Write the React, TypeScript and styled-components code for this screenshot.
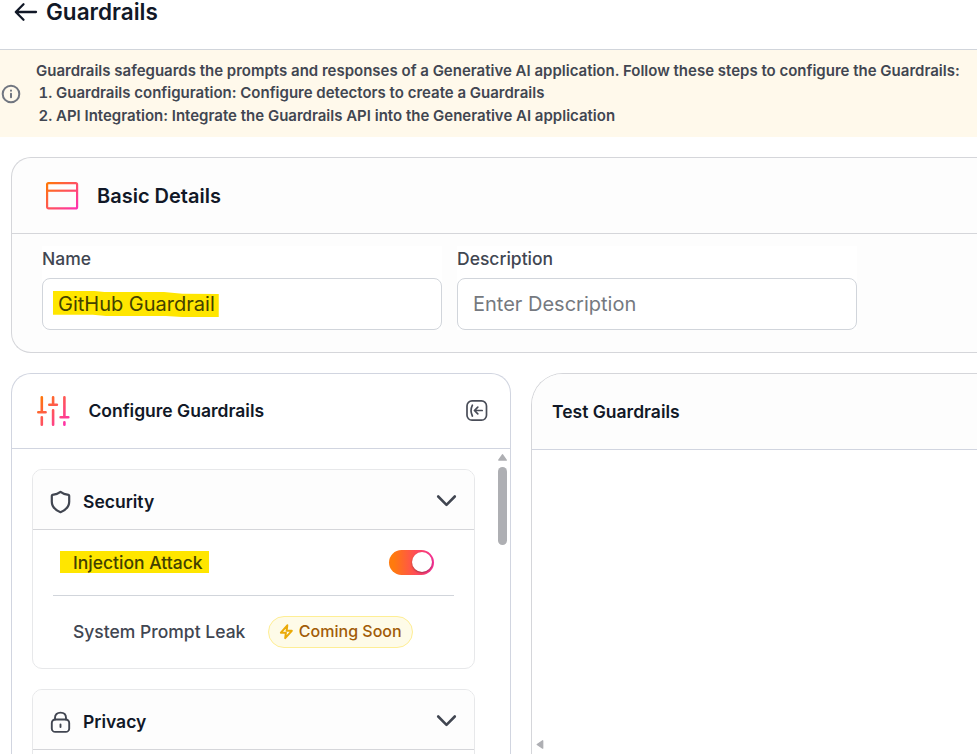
import React from "react";
import styled, { createGlobalStyle } from "styled-components";

const Global = createGlobalStyle`
  * { box-sizing: border-box; }
  html, body, #root { margin: 0; height: 100%; }
  body {
    overflow: hidden;
    background: #fff;
    font-family: Inter, "Liberation Sans", sans-serif;
    color: #111827;
  }
  svg { display: block; flex: none; }
`;

const Page = styled.div`
  width: 977px;
  height: 754px;
  overflow: hidden;
  display: flex;
  flex-direction: column;
`;

const TopBar = styled.header`
  flex: none;
  height: 50px;
  padding: 0 0 25px 14px;
  display: flex;
  align-items: center;
  gap: 8px;
  border-bottom: 1px solid #d1d5db;
`;

const PageTitle = styled.h1`
  margin: 0;
  font-size: 22.5px;
  line-height: 24px;
  font-weight: 600;
`;

const Banner = styled.section`
  flex: none;
  height: 87px;
  display: flex;
  align-items: center;
  gap: 15px;
  padding-left: 1px;
  background: #fff9eb;
  color: #414651;
  font-size: 15px;
  font-weight: 600;
  line-height: 22.5px;
  white-space: nowrap;
`;

const BannerText = styled.div`
  margin-top: 0;
`;

const Step = styled.div`
  display: flex;
  padding-left: 2.5px;
`;

const StepNumber = styled.span`
  width: 17.5px;
  font-variant-numeric: tabular-nums;
`;

const DetailsCard = styled.section`
  flex: none;
  height: 196px;
  margin: 20px 0 0 11px;
  border: 1px solid #d5d6da;
  border-right: 0;
  border-radius: 20px 0 0 20px;
  background: #fdfdfd;
`;

const DetailsHeader = styled.div`
  height: 76px;
  padding-left: 33px;
  display: flex;
  align-items: center;
  gap: 18px;
  border-bottom: 1px solid #d5d6da;
`;

const SectionTitle = styled.h2<{ $size: number }>`
  margin: 0;
  font-size: ${(p) => p.$size}px;
  font-weight: 600;
  line-height: 24px;
`;

const Fields = styled.div`
  display: flex;
  gap: 15px;
  padding: 12px 30px;
`;

const Field = styled.label`
  width: 400px;
  background: #fff;
  display: flex;
  flex-direction: column;
`;

const FieldLabel = styled.span`
  height: 32px;
  line-height: 26px;
  font-size: 17.5px;
  font-weight: 500;
  color: #414651;
`;

const InputBox = styled.div`
  height: 52px;
  padding: 0 15px;
  display: flex;
  align-items: center;
  border: 1px solid #d1d5db;
  border-radius: 8px;
  background: #fff;
  font-size: 20px;
  color: #757980;
`;

const MarkedText = styled.span<{ $shape: string; $left: number; $right: number; $top: number; $bottom: number }>`
  position: relative;
  z-index: 0;
  color: #434100;
  &::before {
    content: "";
    position: absolute;
    z-index: -1;
    left: -${(p) => p.$left}px;
    right: -${(p) => p.$right}px;
    top: ${(p) => p.$top}px;
    bottom: ${(p) => p.$bottom}px;
    background: #ffe600;
    clip-path: ${(p) => p.$shape};
  }
`;

const Columns = styled.main`
  flex: 1;
  min-height: 0;
  display: flex;
  gap: 20px;
  padding: 20px 0 0 11px;
`;

const ConfigurePanel = styled.section`
  width: 500px;
  border: 1px solid #d1d5e0;
  border-bottom: 0;
  border-radius: 20px 20px 0 0;
  display: flex;
  flex-direction: column;
`;

const ConfigureHeader = styled.div`
  flex: none;
  height: 75px;
  display: flex;
  align-items: center;
  padding: 0 22px 0 25px;
  gap: 18.4px;
  border-bottom: 1px solid #d1d5e0;
  h2 { flex: 1; }
`;

const ScrollBody = styled.div`
  flex: 1;
  min-height: 0;
  display: flex;
  justify-content: space-between;
`;

const Groups = styled.div`
  width: 443px;
  margin: 20px 0 0 20px;
  display: flex;
  flex-direction: column;
  gap: 20px;
`;

const Group = styled.section<{ $height: number }>`
  flex: none;
  height: ${(p) => p.$height}px;
  border: 1px solid #e7e8ea;
  border-radius: 10px;
  overflow: hidden;
`;

const GroupHeader = styled.div`
  height: 60px;
  padding: 4px 17px 0;
  display: flex;
  align-items: center;
  gap: 12px;
  background: #fdfdfd;
  border-bottom: 1px solid #d5d6da;
  h2 { flex: 1; }
`;

const DetectorRow = styled.div<{ $divided?: boolean }>`
  height: ${(p) => (p.$divided ? 66 : 72)}px;
  margin: 0 20px;
  padding: 0 20px;
  display: flex;
  align-items: center;
  gap: 23px;
  border-bottom: ${(p) => (p.$divided ? "1px solid #d1d5db" : "0")};
  font-size: 17.5px;
  font-weight: 500;
  color: #414651;
`;

const DetectorName = styled.span`
  padding-bottom: 2px;
`;

const Toggle = styled.span`
  width: 45px;
  height: 25px;
  margin-left: auto;
  padding: 2px;
  display: flex;
  justify-content: flex-end;
  border-radius: 13px;
  background: linear-gradient(90deg, #ff7a0d 10%, #ff5151 55%, #f83099 100%);
`;

const Knob = styled.span`
  width: 20px;
  height: 20px;
  border-radius: 50%;
  background: #fff;
  box-shadow: 0 1px 2px rgba(0, 0, 0, 0.35);
`;

const Badge = styled.span`
  width: 145px;
  height: 32px;
  padding-left: 10px;
  display: flex;
  align-items: center;
  gap: 4.5px;
  border: 1px solid #feee95;
  border-radius: 16px;
  background: #fefbe8;
  color: #a15c07;
  font-size: 16px;
  white-space: nowrap;
`;

const BadgeLabel = styled.span`
  padding-bottom: 2px;
`;

const ScrollTrack = styled.div`
  width: 9px;
  margin: 5px 3px 0 0;
  display: flex;
  flex-direction: column;
  gap: 6px;
`;

const ScrollThumb = styled.div`
  height: 78px;
  border-radius: 5px;
  background: #aeafb3;
`;

const TestPanel = styled.section`
  flex: 1;
  border: 1px solid #d5d6da;
  border-right: 0;
  border-bottom: 0;
  border-radius: 32px 0 0 0;
  overflow: hidden;
  display: flex;
  flex-direction: column;
`;

const TestHeader = styled.div`
  height: 76px;
  padding: 0 0 0 20px;
  display: flex;
  align-items: center;
  background: #fdfdfd;
  border-bottom: 1px solid #d1d5e0;
`;

const HorizontalTrack = styled.div`
  margin-top: auto;
  padding: 0 0 5px 4px;
`;

const BackArrow = () => (
  <svg width="24" height="24" viewBox="0 0 24 24" fill="none" stroke="#111827" strokeWidth="2.3" strokeLinecap="round" strokeLinejoin="round">
    <path d="M22 12H2M9.5 4.2 1.8 12l7.7 7.8" />
  </svg>
);

const InfoIcon = () => (
  <svg width="20" height="20" viewBox="0 0 20 20" fill="none" stroke="#717680" strokeWidth="2" strokeLinecap="round">
    <circle cx="10" cy="10" r="8.3" />
    <path d="M10 9.8v3.5M10 6.6v.1" />
  </svg>
);

const Gradient = ({ id }: { id: string }) => (
  <defs>
    <linearGradient id={id} gradientUnits="userSpaceOnUse" x1="2" y1="2" x2="31" y2="31">
      <stop stopColor="#ff7a00" />
      <stop offset="1" stopColor="#ff2fb3" />
    </linearGradient>
  </defs>
);

const WindowIcon = () => (
  <svg width="34" height="34" viewBox="0 0 34 34" fill="none" stroke="url(#windowFill)" strokeWidth="2.2" strokeLinejoin="round">
    <Gradient id="windowFill" />
    <rect x="2.1" y="4.1" width="30" height="25.3" rx="1.5" />
    <path d="M2 11.7h30" />
  </svg>
);

const SlidersIcon = () => (
  <svg width="33" height="34" viewBox="0 0 33 34" fill="none" stroke="url(#sliderFill)" strokeWidth="2.6" strokeLinecap="round">
    <Gradient id="sliderFill" />
    <path d="M4.8 3.3v15M4.8 23.3v7.4M1.3 18.3h7.3M16.1 3.3v7.5M16.1 16.3v14.4M12.3 10.8h7.6M27.4 3.3v20M27.4 28.3v2.4M23.6 23.3h7.7" />
  </svg>
);

const CollapseIcon = () => (
  <svg width="22" height="22" viewBox="0 0 22 22" fill="none" stroke="#494d58" strokeWidth="1.7" strokeLinecap="round" strokeLinejoin="round">
    <rect x="1" y=".9" width="19.5" height="19.3" rx="5" />
    <path d="M6.4 5.2C4.8 8.5 4.8 12.8 6.4 16M16.2 10.5H8.6M11.8 7.1l-3.4 3.4 3.4 3.4" />
  </svg>
);

const ShieldIcon = () => (
  <svg width="21" height="24" viewBox="0 0 21 24" fill="none" stroke="#414651" strokeWidth="2.2" strokeLinejoin="round">
    <path d="M10.5 1.8C8.2 3.7 5.5 4.4 2.5 4.8c-.5.1-.7.4-.7.9v6c0 4.8 3.8 8.500 8.700 10.500 4.900-2 8.700-5.700 8.700-10.500v-6c0-.5-.2-.8-.7-.9-3-.4-5.700-1.100-8-3Z" />
  </svg>
);

const LockIcon = () => (
  <svg width="21" height="24" viewBox="0 0 21 24" fill="none" stroke="#414651" strokeWidth="1.9" strokeLinecap="round">
    <rect x="1.8" y="9.500" width="17.4" height="12.4" rx="3.5" />
    <path d="M5 9.500V7.800C5 4.600 7.200 2.600 10.500 2.600S16 4.600 16 7.800V9.500M10.500 14.500v2.500" />
  </svg>
);

const ChevronIcon = () => (
  <svg width="22" height="16" viewBox="0 0 22 16" fill="none" stroke="#414651" strokeWidth="2.6" strokeLinecap="round" strokeLinejoin="round">
    <path d="m3.2 2.5 8.3 8.3 8.3-8.3" />
  </svg>
);

const BoltIcon = () => (
  <svg width="15" height="16" viewBox="0 0 15 16" fill="none" stroke="#eaaa08" strokeWidth="2" strokeLinejoin="round">
    <path d="M8.3 1.300 1.900 8.700h5l-.7 5.500L12.800 6.800H7.600l.7-5.500Z" />
  </svg>
);

const UpArrow = () => (
  <svg width="9" height="7" viewBox="0 0 9 7" fill="#aeafb3" stroke="#aeafb3" strokeWidth="1.500" strokeLinejoin="round">
    <path d="M4.500.9 8.200 6.100H.8Z" />
  </svg>
);

const LeftArrow = () => (
  <svg width="8" height="9" viewBox="0 0 8 9" fill="#aeafb3" stroke="#aeafb3" strokeWidth="1.300" strokeLinejoin="round">
    <path d="M1.200 4.500 6.700.8v7.400Z" />
  </svg>
);

export default function App() {
  return (
    <>
      <Global />
      <Page>
        <TopBar>
          <BackArrow />
          <PageTitle>Guardrails</PageTitle>
        </TopBar>
        <Banner>
          <InfoIcon />
          <BannerText>
            <div>Guardrails safeguards the prompts and responses of a Generative AI application. Follow these steps to configure the Guardrails:</div>
            <Step>
              <StepNumber>1.</StepNumber>
              Guardrails configuration: Configure detectors to create a Guardrails
            </Step>
            <Step>
              <StepNumber>2.</StepNumber>
              API Integration: Integrate the Guardrails API into the Generative AI application
            </Step>
          </BannerText>
        </Banner>

        <DetailsCard>
          <DetailsHeader>
            <WindowIcon />
            <SectionTitle $size={20}>Basic Details</SectionTitle>
          </DetailsHeader>
          <Fields>
            <Field>
              <FieldLabel>Name</FieldLabel>
              <InputBox>
                <MarkedText
                  $left={5}
                  $right={4}
                  $top={-1}
                  $bottom={-1}
                  $shape="polygon(0 0, 25% 0, 31% 4%, 67% 4%, 78% 11%, 100% 12%, 100% 100%, 78% 100%, 68% 96%, 32% 96%, 24% 91%, 0 91%)"
                >
                  GitHub Guardrail
                </MarkedText>
              </InputBox>
            </Field>
            <Field>
              <FieldLabel>Description</FieldLabel>
              <InputBox>Enter Description</InputBox>
            </Field>
          </Fields>
        </DetailsCard>

        <Columns>
          <ConfigurePanel>
            <ConfigureHeader>
              <SlidersIcon />
              <SectionTitle $size={17.5}>Configure Guardrails</SectionTitle>
              <CollapseIcon />
            </ConfigureHeader>
            <ScrollBody>
              <Groups>
                <Group $height={200}>
                  <GroupHeader>
                    <ShieldIcon />
                    <SectionTitle $size={17.5}>Security</SectionTitle>
                    <ChevronIcon />
                  </GroupHeader>
                  <DetectorRow $divided>
                    <MarkedText $left={13} $right={6} $top={-1} $bottom={0} $shape="none">
                      Injection Attack
                    </MarkedText>
                    <Toggle>
                      <Knob />
                    </Toggle>
                  </DetectorRow>
                  <DetectorRow>
                    <DetectorName>System Prompt Leak</DetectorName>
                    <Badge>
                      <BoltIcon />
                      <BadgeLabel>Coming Soon</BadgeLabel>
                    </Badge>
                  </DetectorRow>
                </Group>
                <Group $height={200}>
                  <GroupHeader>
                    <LockIcon />
                    <SectionTitle $size={17.5}>Privacy</SectionTitle>
                    <ChevronIcon />
                  </GroupHeader>
                </Group>
              </Groups>
              <ScrollTrack>
                <UpArrow />
                <ScrollThumb />
              </ScrollTrack>
            </ScrollBody>
          </ConfigurePanel>
          <TestPanel>
            <TestHeader>
              <SectionTitle $size={17.5}>Test Guardrails</SectionTitle>
            </TestHeader>
            <HorizontalTrack>
              <LeftArrow />
            </HorizontalTrack>
          </TestPanel>
        </Columns>
      </Page>
    </>
  );
}
